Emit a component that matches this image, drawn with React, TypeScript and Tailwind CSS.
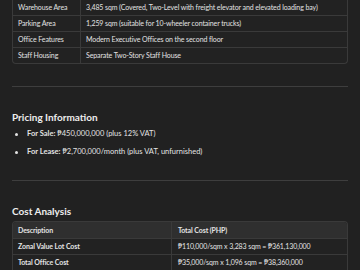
const SPECS = [
  ["Warehouse Area", "3,485 sqm (Covered, Two-Level with freight elevator and elevated loading bay)"],
  ["Parking Area", "1,259 sqm (suitable for 10-wheeler container trucks)"],
  ["Office Features", "Modern Executive Offices on the second floor"],
  ["Staff Housing", "Separate Two-Story Staff House"],
];

const COSTS = [
  ["Zonal Value Lot Cost", "₱110,000/sqm x 3,283 sqm = ₱361,130,000"],
  ["Total Office Cost", "₱35,000/sqm x 1,096 sqm = ₱38,360,000"],
];

const PRICING = [
  ["For Sale:", "₱450,000,000 (plus 12% VAT)"],
  ["For Lease:", "₱2,700,000/month (plus VAT, unfurnished)"],
];

export default function App() {
  return (
    <div
      className="h-[270px] w-[360px] overflow-hidden bg-[#212121] text-[#e3e3e3]"
      style={{ fontFamily: 'Lato, "Open Sans", sans-serif' }}
    >
      <div className="-mt-[1px] px-3">
        {/* Specs table */}
        <div className="overflow-hidden rounded-b-[4px] border border-t-0 border-[#3a3a3a] bg-[#222222]">
          {SPECS.map(([k, v], i) => (
            <div
              key={k}
              className={`flex h-[16px] items-center whitespace-nowrap text-[7px] tracking-[-0.1px] ${i > 0 ? "border-t border-[#3a3a3a]" : ""}`}
            >
              <div className="flex h-full w-[68px] items-center border-r border-[#3a3a3a] pl-[5px]">{k}</div>
              <div className="pl-[5px]">{v}</div>
            </div>
          ))}
        </div>

        <div className="mt-[22px] h-px bg-[#3e3e3e]" />

        {/* Pricing */}
        <h2 className="mt-[24px] text-[10px] font-bold leading-[13px] text-[#ededed]">Pricing Information</h2>
        <ul className="mt-[1px]">
          {PRICING.map(([k, v]) => (
            <li key={k} className="flex h-[18px] items-center whitespace-nowrap text-[7.5px]">
              <span className="ml-[3px] mr-[9px] h-[3px] w-[3px] rounded-full bg-[#e3e3e3]" />
              <span className="font-bold">{k}</span>
              <span className="ml-[2px]">{v}</span>
            </li>
          ))}
        </ul>

        <div className="mt-[19px] h-px bg-[#3e3e3e]" />

        {/* Cost analysis */}
        <h2 className="mt-[24px] text-[10px] font-bold leading-[13px] text-[#ededed]">Cost Analysis</h2>
        <div className="mt-[3px] overflow-hidden rounded-t-[4px] border border-b-0 border-[#3a3a3a] bg-[#222222] whitespace-nowrap text-[7px] tracking-[-0.1px]">
          <div className="flex h-[16px] items-center bg-[#2f2f2f] font-bold">
            <div className="flex h-full w-[159px] items-center border-r border-[#3a3a3a] pl-[5px]">Description</div>
            <div className="pl-[6px]">Total Cost (PHP)</div>
          </div>
          {COSTS.map(([k, v]) => (
            <div key={k} className="flex h-[16px] items-center border-t border-[#3a3a3a]">
              <div className="flex h-full w-[159px] items-center border-r border-[#3a3a3a] pl-[5px] font-bold">{k}</div>
              <div className="pl-[6px]">{v}</div>
            </div>
          ))}
        </div>
      </div>
    </div>
  );
}
